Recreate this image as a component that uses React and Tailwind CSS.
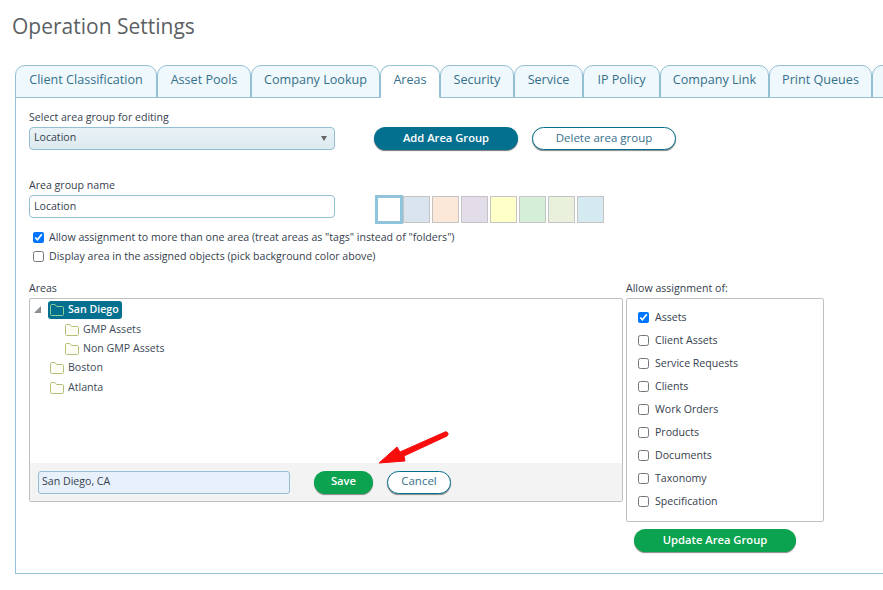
const tabs = [
  { label: "Client Classification", w: "w-[142px]" },
  { label: "Asset Pools", w: "w-[94px]" },
  { label: "Company Lookup", w: "w-[129px]" },
  { label: "Areas", w: "w-[60px]", active: true },
  { label: "Security", w: "w-[74px]" },
  { label: "Service", w: "w-[69px]" },
  { label: "IP Policy", w: "w-[77px]" },
  { label: "Company Link", w: "w-[109px]" },
  { label: "Print Queues", w: "w-[103px]" },
  { label: "", w: "w-[60px]" },
];

const swatches = [
  "bg-[#d9e4ef]",
  "bg-[#fbe8d9]",
  "bg-[#e2dde9]",
  "bg-[#ffffc8]",
  "bg-[#d5eed8]",
  "bg-[#e9f0db]",
  "bg-[#d5e9f0]",
];

const assignTypes = [
  "Assets",
  "Client Assets",
  "Service Requests",
  "Clients",
  "Work Orders",
  "Products",
  "Documents",
  "Taxonomy",
  "Specification",
];

const Folder = ({ selected }) => (
  <svg width="14" height="12" viewBox="0 0 14 12" fill="none" className="shrink-0">
    <path
      d="M0.5 10.5V1.5C0.5 1 1 0.5 1.5 0.5H5L6.5 2.5H12.5C13 2.5 13.5 3 13.5 3.5V10.5C13.5 11 13 11.5 12.5 11.5H1.5C1 11.5 0.5 11 0.5 10.5Z"
      stroke={selected ? "#8fcf9a" : "#b5bf78"}
      fill={selected ? "none" : "#fdfdf6"}
    />
  </svg>
);

const TreeRow = ({ indent, label }) => (
  <div className={`flex h-[19px] items-center gap-[4px] ${indent}`}>
    <Folder />
    <span className="text-[#3d4a58]">{label}</span>
  </div>
);

const App = () => {
  return (
    <div className="relative h-[590px] w-[883px] overflow-hidden bg-white font-['Open_Sans','Noto_Sans',sans-serif] text-[10.6px] text-[#36414d]">
      <h1 className="pl-3 pt-[11px] text-[21px] leading-[30px] text-[#5c5f63]">Operation Settings</h1>

      {/* Tabs */}
      <div className="relative z-10 mt-6 ml-[15px] flex h-[33px] w-[1000px]">
        {tabs.map((tab) => (
          <div
            key={tab.label || "more"}
            className={`${tab.w} flex h-[33px] shrink-0 items-center justify-center rounded-t-[10px] border border-[#93bfd3] pb-[3px] text-[12.6px] text-[#35708a] ${
              tab.active ? "border-b-white bg-white" : "bg-[#eff8fc]"
            }`}
          >
            {tab.label}
          </div>
        ))}
      </div>

      {/* Panel */}
      <div className="-mt-px ml-[15px] h-[477px] w-[1000px] border border-[#93c2da] pl-[13px] pt-[12px]">
        <div className="leading-[14px]">Select area group for editing</div>
        <div className="mt-[3px] flex items-start">
          <div className="flex h-[23px] w-[306px] items-center justify-between rounded-[4px] border border-[#93bfd3] bg-gradient-to-b from-[#e9f3f7] to-[#dce9ef] pb-[2px] pl-1 pr-[7px]">
            <span>Location</span>
            <svg width="6" height="5" viewBox="0 0 6 5" className="mt-[2px]">
              <path d="M0 0H6L3 5Z" fill="#666" />
            </svg>
          </div>
          <button className="ml-[39px] h-[23px] w-[144px] rounded-full bg-[#03708f] pb-px text-[11.2px] font-semibold text-white shadow-[0_1px_1px_#777]">
            Add Area Group
          </button>
          <button className="ml-[14px] h-[23px] w-[144px] rounded-full border border-[#03708f] bg-white pb-px text-[11.5px] text-[#35708a] shadow-[0_1px_1px_#888]">
            Delete area group
          </button>
        </div>

        <div className="mt-[28px] leading-[14px]">Area group name</div>
        <div className="mt-[3px] flex items-start">
          <input
            readOnly
            value="Location"
            className="h-[23px] w-[306px] rounded-[4px] border border-[#93bfd3] bg-white px-1 pb-[2px] text-[#36414d] outline-none"
          />
          <div className="ml-[40px] flex items-start gap-[2px]">
            <div className="-mr-[2px] h-[29px] w-[28px] border-[3px] border-[#90c4dc] bg-white" />
            {swatches.map((color) => (
              <div key={color} className={`mt-px h-[27px] w-[27px] border border-[#c4c4c4] ${color}`} />
            ))}
          </div>
        </div>

        <div className="mt-[4px] ml-1 flex h-[19px] items-center gap-[5px]">
          <input type="checkbox" readOnly checked className="m-0 h-[11px] w-[11px]" />
          <span>Allow assignment to more than one area (treat areas as "tags" instead of "folders")</span>
        </div>
        <div className="ml-1 flex h-[19px] items-center gap-[5px]">
          <input type="checkbox" readOnly className="m-0 h-[11px] w-[11px]" />
          <span>Display area in the assigned objects (pick background color above)</span>
        </div>

        <div className="mt-[15px] flex items-start gap-[3px]">
          {/* Areas tree */}
          <div className="w-[594px]">
            <div className="leading-[14px]">Areas</div>
            <div className="mt-[3px] flex h-[204px] flex-col rounded-[2px] border border-[#c0c0c0]">
              <div className="flex-1 pt-[1px]">
                <div className="mb-px flex h-[19px] items-center">
                  <svg width="7" height="7" viewBox="0 0 7 7" className="ml-[4px] mr-[7px] shrink-0">
                    <path d="M7 0V7H0Z" fill="#8a8f94" />
                  </svg>
                  <div className="flex h-[18px] items-center gap-[4px] rounded-[3px] bg-[#03708f] pl-[2px] pr-[3px] font-semibold text-white">
                    <Folder selected />
                    San Diego
                  </div>
                </div>
                <TreeRow indent="ml-[35px]" label="GMP Assets" />
                <TreeRow indent="ml-[35px]" label="Non GMP Assets" />
                <TreeRow indent="ml-[20px]" label="Boston" />
                <TreeRow indent="ml-[20px] mt-px" label="Atlanta" />
              </div>
              <div className="flex h-[38px] items-center bg-[#f3f3f3] pl-2">
                <input
                  readOnly
                  value="San Diego, CA"
                  className="h-[23px] w-[252px] rounded-[3px] border border-[#93bfd3] bg-[#e8f0fb] px-[3px] pb-[2px] text-[#36414d] outline-none"
                />
                <button className="ml-6 h-[23px] w-[59px] rounded-full bg-[#0ca350] pb-px text-[11.2px] font-semibold text-white shadow-[0_1px_1px_#888]">
                  Save
                </button>
                <button className="ml-[14px] h-[23px] w-[64px] rounded-full border border-[#03708f] bg-white pb-[2px] text-[11.5px] text-[#35708a] shadow-[0_1px_1px_#888]">
                  Cancel
                </button>
              </div>
            </div>
          </div>

          {/* Allow assignment */}
          <div className="w-[198px]">
            <div className="leading-[14px]">Allow assignment of:</div>
            <div className="mt-[3px] h-[224px] rounded-[2px] border border-[#c0c0c0] pl-[11px] pt-[7px]">
              {assignTypes.map((name, i) => (
                <div key={name} className="flex h-[23px] items-center gap-[6px]">
                  <input type="checkbox" readOnly checked={i === 0} className="m-0 h-[11px] w-[11px]" />
                  <span>{name}</span>
                </div>
              ))}
            </div>
            <button className="ml-2 mt-[7px] h-[23px] w-[162px] rounded-full bg-[#0ca350] text-[11.2px] font-semibold text-white shadow-[0_1px_1px_#888]">
              Update Area Group
            </button>
          </div>
        </div>
      </div>

      {/* Red annotation arrow */}
      <svg width="883" height="590" className="pointer-events-none absolute left-0 top-0 z-20">
        <path d="M379 463L397 447L400 452L445 432C448 431 449 435 447 436L404 456L405 461Z" fill="#f80d0d" stroke="#f80d0d" strokeLinejoin="round" />
      </svg>
    </div>
  );
};

export default App;
